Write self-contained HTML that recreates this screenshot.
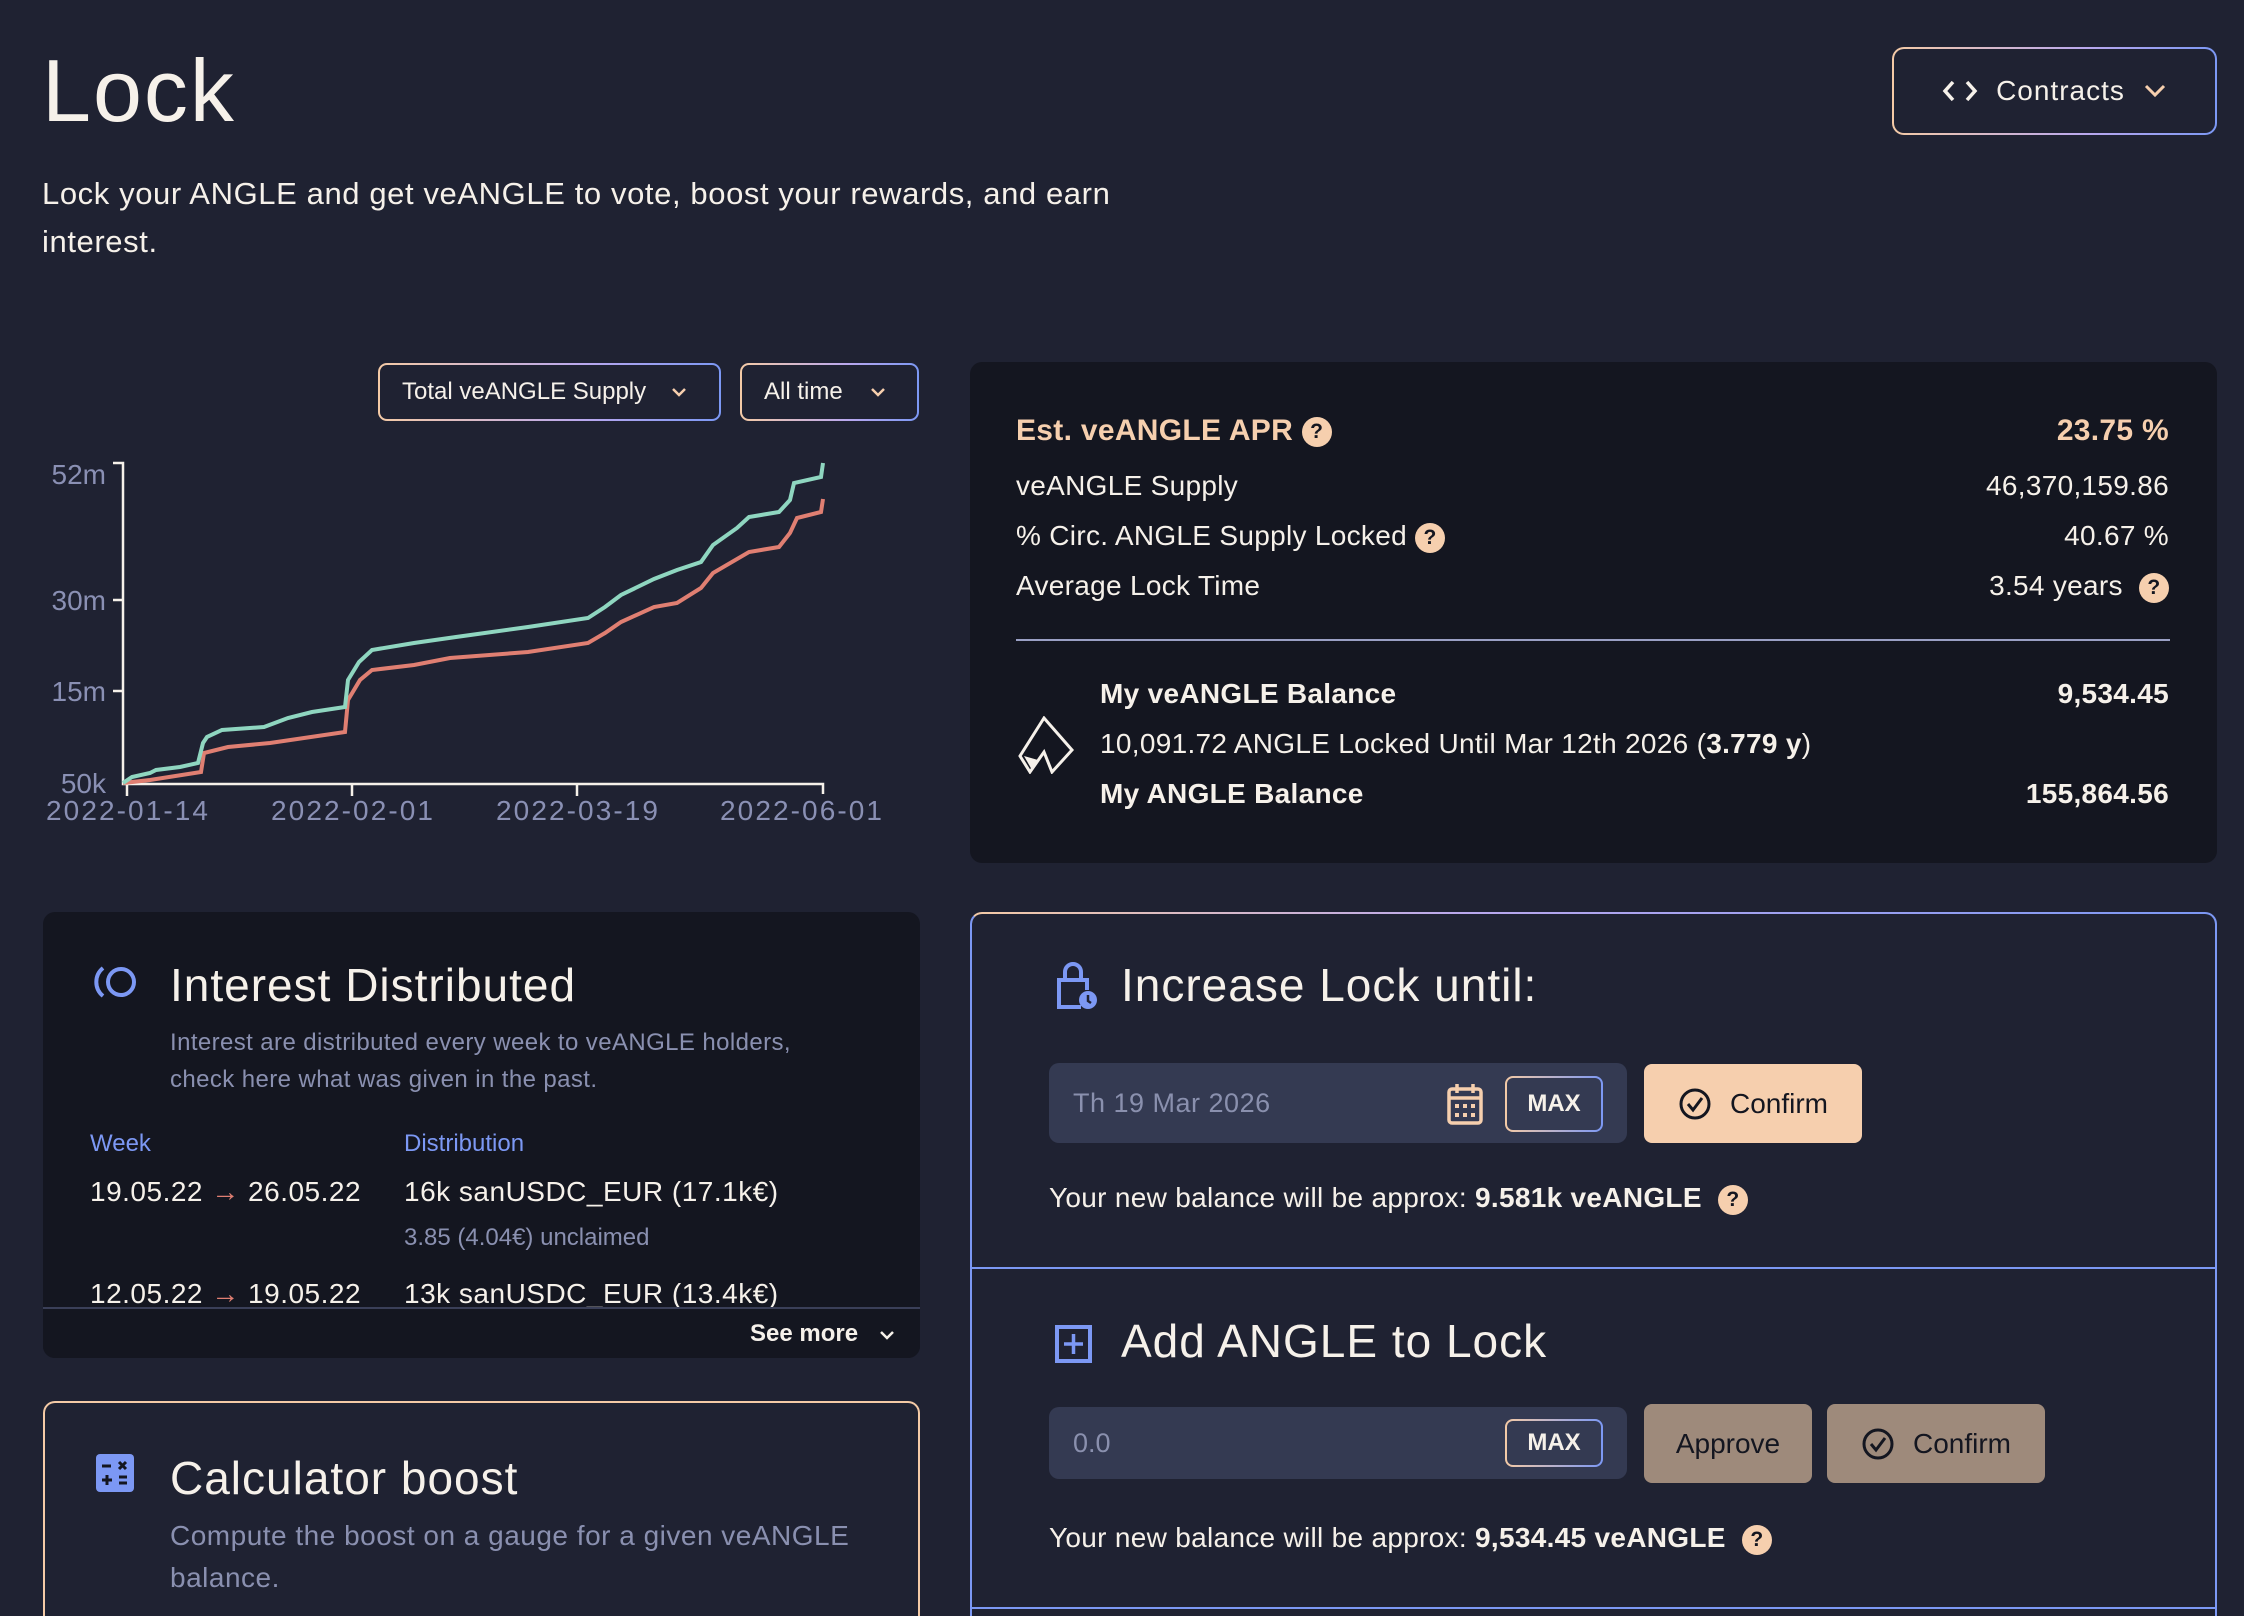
<!DOCTYPE html>
<html><head><meta charset="utf-8"><style>
*{box-sizing:border-box;margin:0;padding:0}
html,body{width:2244px;height:1616px;overflow:hidden}
body{background:#1f2232;font-family:"Liberation Sans",sans-serif;color:#f6f1ea;position:relative}
#w{position:absolute;left:0;top:0;width:2244px;height:1616px;overflow:hidden}
.abs{position:absolute}
.gb{border:2px solid transparent;background:linear-gradient(#1f2232,#1f2232) padding-box,linear-gradient(90deg,#f4caa6,#b9a8ee 60%,#7c98f4) border-box}
.q{display:inline-block;width:30px;height:30px;border-radius:50%;background:#f6cfae;color:#141620;font-size:21px;font-weight:bold;text-align:center;line-height:30px;vertical-align:middle}
.row{position:absolute;left:1016px;right:75px;display:flex;justify-content:space-between;align-items:center;font-size:28px;letter-spacing:0.3px}
.t{letter-spacing:1px}
</style></head><body><div id="w">
<div class="abs" style="left:42px;top:40px;font-size:88px;letter-spacing:2px">Lock</div>
<div class="abs" style="left:42px;top:170px;width:1150px;font-size:31px;line-height:48px;letter-spacing:0.6px">Lock your ANGLE and get veANGLE to vote, boost your rewards, and earn interest.</div>

<div class="abs gb" style="left:1892px;top:47px;width:325px;height:88px;border-radius:12px;display:flex;align-items:center;justify-content:center;gap:18px;font-size:28px;letter-spacing:1px">
<svg width="36" height="24" viewBox="0 0 36 24"><path d="M11 3 3 12l8 9M25 3l8 9-8 9" stroke="#f6f1ea" stroke-width="3.5" fill="none"/></svg>
<span>Contracts</span>
<svg width="24" height="16" viewBox="0 0 24 16"><path d="M3 3l9 9 9-9" stroke="#f6cfae" stroke-width="3" fill="none"/></svg></div>

<div class="abs gb" style="left:378px;top:363px;width:343px;height:58px;border-radius:9px;font-size:24px;display:flex;align-items:center;padding-left:22px">Total veANGLE Supply<svg style="margin-left:24px" width="18" height="12" viewBox="0 0 18 12"><path d="M3 3l6 6 6-6" stroke="#f6cfae" stroke-width="2.5" fill="none"/></svg></div>
<div class="abs gb" style="left:740px;top:363px;width:179px;height:58px;border-radius:9px;font-size:24px;display:flex;align-items:center;padding-left:22px">All time<svg style="margin-left:26px" width="18" height="12" viewBox="0 0 18 12"><path d="M3 3l6 6 6-6" stroke="#f6cfae" stroke-width="2.5" fill="none"/></svg></div>

<svg class="abs" style="left:0;top:440px" width="940" height="400" viewBox="0 440 940 400">
<g font-family="Liberation Sans" font-size="28" fill="#8a90b4">
<text x="106" y="484" text-anchor="end">52m</text><text x="106" y="610" text-anchor="end">30m</text><text x="106" y="701" text-anchor="end">15m</text><text x="106" y="793" text-anchor="end">50k</text>
<text x="127" y="820" text-anchor="middle" textLength="162">2022-01-14</text><text x="352" y="820" text-anchor="middle" textLength="162">2022-02-01</text><text x="577" y="820" text-anchor="middle" textLength="162">2022-03-19</text><text x="801" y="820" text-anchor="middle" textLength="162">2022-06-01</text></g>
<g stroke="#f6f1ea" stroke-width="2.5" fill="none"><path d="M113 463H123V784H823V794M113 600h10M113 691h10M127 784v12M352 784v12M577 784v12"/></g>
<polyline fill="none" stroke="#e07f72" stroke-width="4" points="123,783 150,780 201,772 204,753 228,747 270,743 345,732 348,700 360,680 372,670 414,665 450,658 528,652 588,643 605,633 621,622 654,607 677,603 701,588 713,573 749,552 779,547 790,533 797,518 821,512 823,499"/>
<polyline fill="none" stroke="#8fd6c0" stroke-width="4" points="123,783 132,777 150,773 156,770 180,767 198,763 203,743 207,737 222,730 264,727 288,718 312,712 345,707 348,680 359,662 372,650 414,643 456,637 528,627 588,618 605,607 621,595 654,579 677,570 701,562 713,545 737,528 749,517 779,512 790,500 794,483 821,477 823,463"/>
</svg>

<div class="abs" style="left:970px;top:362px;width:1247px;height:501px;background:#141620;border-radius:12px"></div>
<div class="row" style="top:414px;color:#f6cfae;font-size:30px;font-weight:bold"><span>Est. veANGLE APR <span class="q">?</span></span><span>23.75 %</span></div>
<div class="row" style="top:470px"><span>veANGLE Supply</span><span>46,370,159.86</span></div>
<div class="row" style="top:520px"><span>% Circ. ANGLE Supply Locked <span class="q">?</span></span><span>40.67 %</span></div>
<div class="row" style="top:570px"><span>Average Lock Time</span><span>3.54 years &nbsp;<span class="q">?</span></span></div>
<div class="abs" style="left:1016px;top:639px;width:1154px;height:2px;background:#9aa0c4"></div>
<div class="row" style="left:1100px;top:678px;font-weight:bold"><span>My veANGLE Balance</span><span>9,534.45</span></div>
<div class="row" style="left:1100px;top:728px"><span>10,091.72 ANGLE Locked Until Mar 12th 2026 (<b>3.779 y</b>)</span></div>
<div class="row" style="left:1100px;top:778px;font-weight:bold"><span>My ANGLE Balance</span><span>155,864.56</span></div>
<svg class="abs" style="left:1016px;top:716px" width="60" height="58" viewBox="0 0 60 58"><path d="M28 2 4 40l10 16 14-20 8 20L56 34 28 2z" stroke="#f6f1ea" stroke-width="3" fill="none"/><path d="M8 40l8 14 6-10z" fill="#f6f1ea"/></svg>

<div class="abs" style="left:43px;top:912px;width:877px;height:446px;background:#141620;border-radius:12px;overflow:hidden">
<svg class="abs" style="left:48px;top:52px" width="48" height="36" viewBox="0 0 48 36"><circle cx="30" cy="18" r="13" stroke="#7c98f4" stroke-width="4" fill="none"/><path d="M12 4A18 18 0 0 0 12 32" stroke="#7c98f4" stroke-width="4" fill="none"/></svg>
<div class="abs t" style="left:127px;top:46px;font-size:46px">Interest Distributed</div>
<div class="abs" style="left:127px;top:112px;font-size:24px;line-height:37px;color:#8a90b0;width:660px;letter-spacing:0.4px">Interest are distributed every week to veANGLE holders, check here what was given in the past.</div>
<div class="abs" style="left:47px;top:218px;font-size:24px;color:#7c98f4">Week</div>
<div class="abs" style="left:361px;top:218px;font-size:24px;color:#7c98f4">Distribution</div>
<div class="abs" style="left:47px;top:264px;font-size:28px;letter-spacing:0.5px">19.05.22 <span style="color:#e07f72">→</span> 26.05.22</div>
<div class="abs" style="left:361px;top:264px;font-size:28px;letter-spacing:0.5px">16k sanUSDC_EUR (17.1k€)</div>
<div class="abs" style="left:361px;top:312px;font-size:24px;color:#8a90b0">3.85 (4.04€) unclaimed</div>
<div class="abs" style="left:47px;top:366px;font-size:28px;letter-spacing:0.5px">12.05.22 <span style="color:#e07f72">→</span> 19.05.22</div>
<div class="abs" style="left:361px;top:366px;font-size:28px;letter-spacing:0.5px">13k sanUSDC_EUR (13.4k€)</div>
<div class="abs" style="left:0;top:395px;width:877px;height:51px;background:#141620;border-top:2px solid #3a3f58"></div>
<div class="abs" style="left:707px;top:408px;font-size:24px;font-weight:bold">See more</div>
<svg class="abs" style="left:835px;top:416px" width="18" height="14" viewBox="0 0 18 14"><path d="M3 4l6 6 6-6" stroke="#f6f1ea" stroke-width="2.5" fill="none"/></svg>
</div>

<div class="abs" style="left:43px;top:1401px;width:877px;height:215px;border-radius:12px 12px 0 0;border:2px solid #f4caa6;border-bottom:none">
<svg class="abs" style="left:51px;top:51px" width="38" height="38" viewBox="0 0 38 38"><rect width="38" height="38" rx="4" fill="#7c98f4"/><path d="M6 12h9M23 8l7 7M30 8l-7 7M6 26h10M11 21v10M23 23h8M23 29h8" stroke="#141620" stroke-width="3"/></svg>
<div class="abs t" style="left:125px;top:48px;font-size:46px">Calculator boost</div>
<div class="abs" style="left:125px;top:112px;font-size:28px;line-height:42px;color:#8a90b0;width:740px;letter-spacing:0.5px">Compute the boost on a gauge for a given veANGLE balance.</div>
</div>

<div class="abs" style="left:970px;top:912px;width:1247px;height:704px;border-radius:12px 12px 0 0;border:2px solid #7c98f4;border-top-color:transparent;border-bottom:none;background:linear-gradient(#1f2232,#1f2232) padding-box,linear-gradient(90deg,#f4caa6,#b9a8ee 40%,#7c98f4) border-box"></div>
<div class="abs" style="left:972px;top:1267px;width:1243px;height:2px;background:#7c98f4"></div>
<div class="abs" style="left:972px;top:1607px;width:1243px;height:2px;background:#7c98f4"></div>

<svg class="abs" style="left:1055px;top:962px" width="44" height="50" viewBox="0 0 44 50"><path d="M10 18V10a8 8 0 0 1 16 0v8M26 45H4V18h28v10" stroke="#7c98f4" stroke-width="4" fill="none"/><circle cx="33" cy="38" r="9" fill="#7c98f4"/><path d="M33 33v6l3 2" stroke="#1f2232" stroke-width="2.5" fill="none"/></svg>
<div class="abs t" style="left:1121px;top:958px;font-size:46px">Increase Lock until:</div>
<div class="abs" style="left:1049px;top:1063px;width:578px;height:80px;background:#343a52;border-radius:10px"></div>
<div class="abs" style="left:1073px;top:1088px;font-size:27px;color:#8a90ae;letter-spacing:0.5px">Th 19 Mar 2026</div>
<svg class="abs" style="left:1447px;top:1083px" width="36" height="42" viewBox="0 0 36 42"><rect x="2" y="6" width="32" height="34" rx="3" stroke="#f6cfae" stroke-width="3.5" fill="none"/><path d="M2 15h32M10 1v9M26 1v9" stroke="#f6cfae" stroke-width="3.5"/><g fill="#f6cfae"><rect x="8" y="21" width="4" height="4"/><rect x="16" y="21" width="4" height="4"/><rect x="24" y="21" width="4" height="4"/><rect x="8" y="30" width="4" height="4"/><rect x="16" y="30" width="4" height="4"/><rect x="24" y="30" width="4" height="4"/></g></svg>
<div class="abs gb" style="left:1505px;top:1076px;width:98px;height:56px;border-radius:8px;background:linear-gradient(#343a52,#343a52) padding-box,linear-gradient(90deg,#f4caa6,#7c98f4) border-box;font-size:24px;font-weight:bold;text-align:center;line-height:52px">MAX</div>
<div class="abs" style="left:1644px;top:1064px;width:218px;height:79px;background:#f6cfae;border-radius:8px;color:#141620;font-size:28px;display:flex;align-items:center;justify-content:center;gap:18px"><svg width="34" height="34" viewBox="0 0 34 34"><circle cx="17" cy="17" r="14" stroke="#141620" stroke-width="3" fill="none"/><path d="M10 17l5 6 9-12" stroke="#141620" stroke-width="3" fill="none"/></svg>Confirm</div>
<div class="abs" style="left:1049px;top:1182px;font-size:28px;letter-spacing:0.3px">Your new balance will be approx: <b>9.581k veANGLE</b> &nbsp;<span class="q">?</span></div>

<svg class="abs" style="left:1055px;top:1325px" width="37" height="38" viewBox="0 0 37 38"><rect x="2" y="2" width="33" height="34" stroke="#7c98f4" stroke-width="4" fill="none"/><path d="M18.5 9v20M9 19h19" stroke="#7c98f4" stroke-width="3.5"/></svg>
<div class="abs t" style="left:1121px;top:1314px;font-size:46px">Add ANGLE to Lock</div>
<div class="abs" style="left:1049px;top:1407px;width:578px;height:72px;background:#343a52;border-radius:10px"></div>
<div class="abs" style="left:1073px;top:1428px;font-size:27px;color:#8a90ae">0.0</div>
<div class="abs gb" style="left:1505px;top:1419px;width:98px;height:48px;border-radius:8px;background:linear-gradient(#343a52,#343a52) padding-box,linear-gradient(90deg,#f4caa6,#7c98f4) border-box;font-size:24px;font-weight:bold;text-align:center;line-height:44px">MAX</div>
<div class="abs" style="left:1644px;top:1404px;width:168px;height:79px;background:#9e8a7b;border-radius:8px;color:#141620;font-size:28px;text-align:center;line-height:79px">Approve</div>
<div class="abs" style="left:1827px;top:1404px;width:218px;height:79px;background:#9e8a7b;border-radius:8px;color:#141620;font-size:28px;display:flex;align-items:center;justify-content:center;gap:18px"><svg width="34" height="34" viewBox="0 0 34 34"><circle cx="17" cy="17" r="14" stroke="#141620" stroke-width="3" fill="none"/><path d="M10 17l5 6 9-12" stroke="#141620" stroke-width="3" fill="none"/></svg>Confirm</div>
<div class="abs" style="left:1049px;top:1522px;font-size:28px;letter-spacing:0.3px">Your new balance will be approx: <b>9,534.45 veANGLE</b> &nbsp;<span class="q">?</span></div>
</div></body></html>
